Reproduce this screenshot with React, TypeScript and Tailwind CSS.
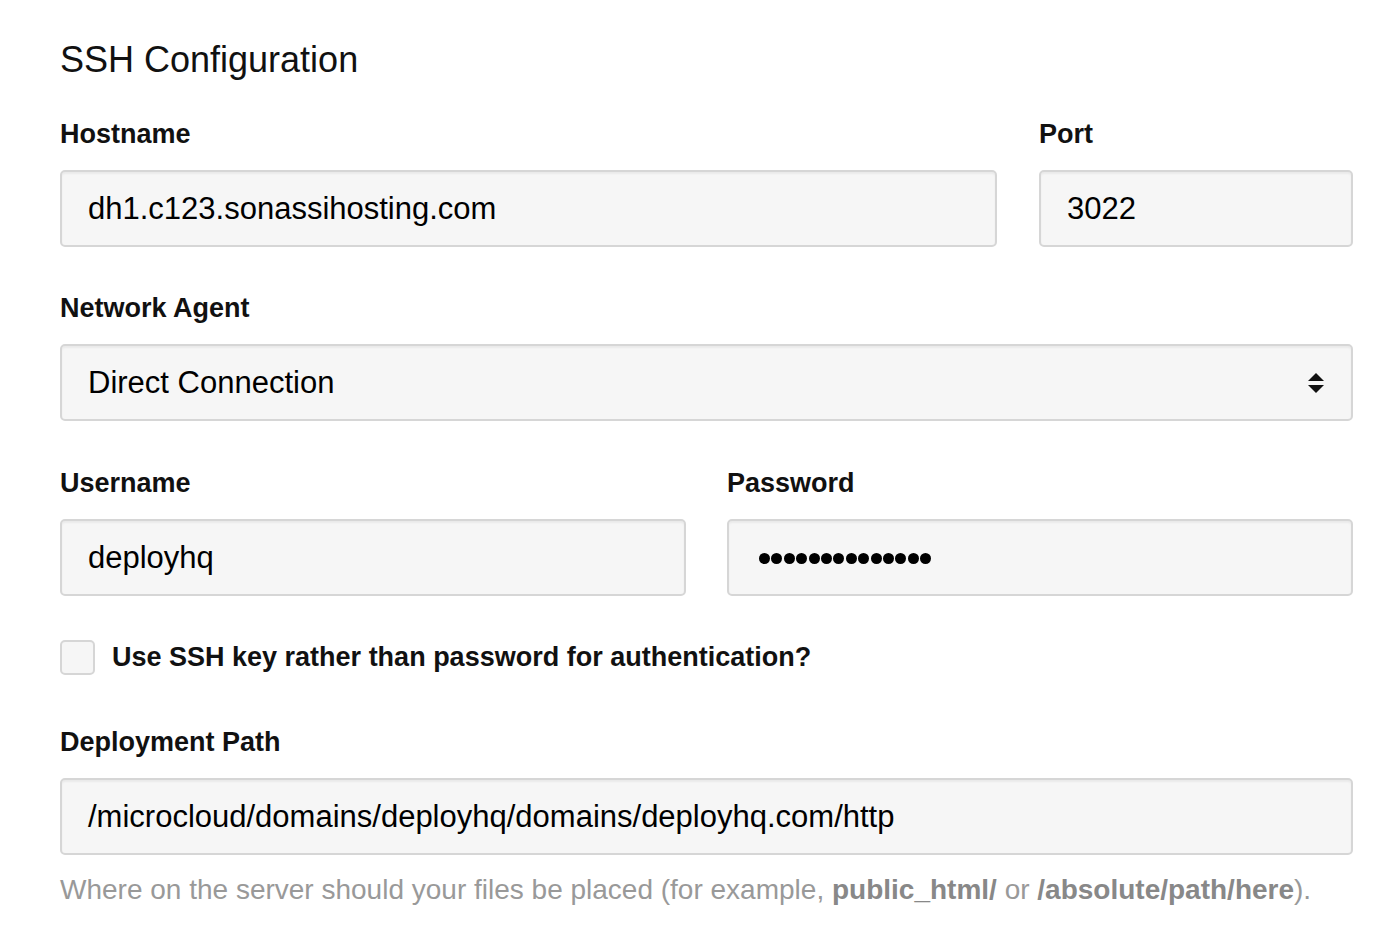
import React from "react"

function Field({ label, children, className = "" }: { label: string; children: React.ReactNode; className?: string }) {
  return (
    <div className={className}>
      <div className="text-[27px] leading-[32px] font-bold text-[#111]">{label}</div>
      <div className="mt-[20px]">{children}</div>
    </div>
  )
}

function Box({ children }: { children?: React.ReactNode }) {
  return (
    <div className="h-[77px] flex items-center pl-[26px] pr-[28px] pt-[2px] bg-[#f6f6f6] border-2 border-[#d6d6d6] rounded-[5px] shadow-[inset_0_2px_2px_rgba(0,0,0,0.05)] text-[31px] text-black">
      {children}
    </div>
  )
}

export default function App() {
  return (
    <div
      className="w-[1400px] h-[928px] bg-white pl-[60px] pr-[47px] pt-[40px]"
      style={{ fontFamily: '"Liberation Sans", Arial, sans-serif' }}
    >
      <h1 className="text-[36px] leading-[40px] text-[#111]">SSH Configuration</h1>

      <div className="mt-[38px] flex gap-[42px]">
        <Field label="Hostname" className="flex-1">
          <Box>dh1.c123.sonassihosting.com</Box>
        </Field>
        <Field label="Port" className="w-[314px]">
          <Box>3022</Box>
        </Field>
      </div>

      <Field label="Network Agent" className="mt-[45px]">
        <Box>
          <span className="flex-1">Direct Connection</span>
          <svg width="20" height="24" viewBox="0 0 20 24" className="mr-[-3px] mt-[-2px]">
            <path d="M10 2 L18 10 L2 10 Z" fill="#111" />
            <path d="M2 14 L18 14 L10 22 Z" fill="#111" />
          </svg>
        </Box>
      </Field>

      <div className="mt-[46px] flex gap-[41px]">
        <Field label="Username" className="flex-1">
          <Box>deployhq</Box>
        </Field>
        <Field label="Password" className="flex-1">
          <Box>
            <div className="flex gap-[1.4px] pl-[4px]">
              {Array.from({ length: 14 }).map((_, i) => (
                <span key={i} className="w-[11px] h-[11px] rounded-full bg-black" />
              ))}
            </div>
          </Box>
        </Field>
      </div>

      <label className="mt-[44px] flex items-center gap-[17px] h-[35px]">
        <span className="w-[35px] h-[35px] rounded-[5px] border-2 border-[#d6d6d6] bg-[#f6f6f6]" />
        <span className="text-[27px] leading-[35px] font-bold text-[#111]">
          Use SSH key rather than password for authentication?
        </span>
      </label>

      <Field label="Deployment Path" className="mt-[51px]">
        <Box>/microcloud/domains/deployhq/domains/deployhq.com/http</Box>
      </Field>

      <p className="mt-[17px] text-[28px] leading-[36px] text-[#999]">
        Where on the server should your files be placed (for example, <b className="text-[#888]">public_html/</b> or{" "}
        <b className="text-[#888]">/absolute/path/here</b>).
      </p>
    </div>
  )
}
